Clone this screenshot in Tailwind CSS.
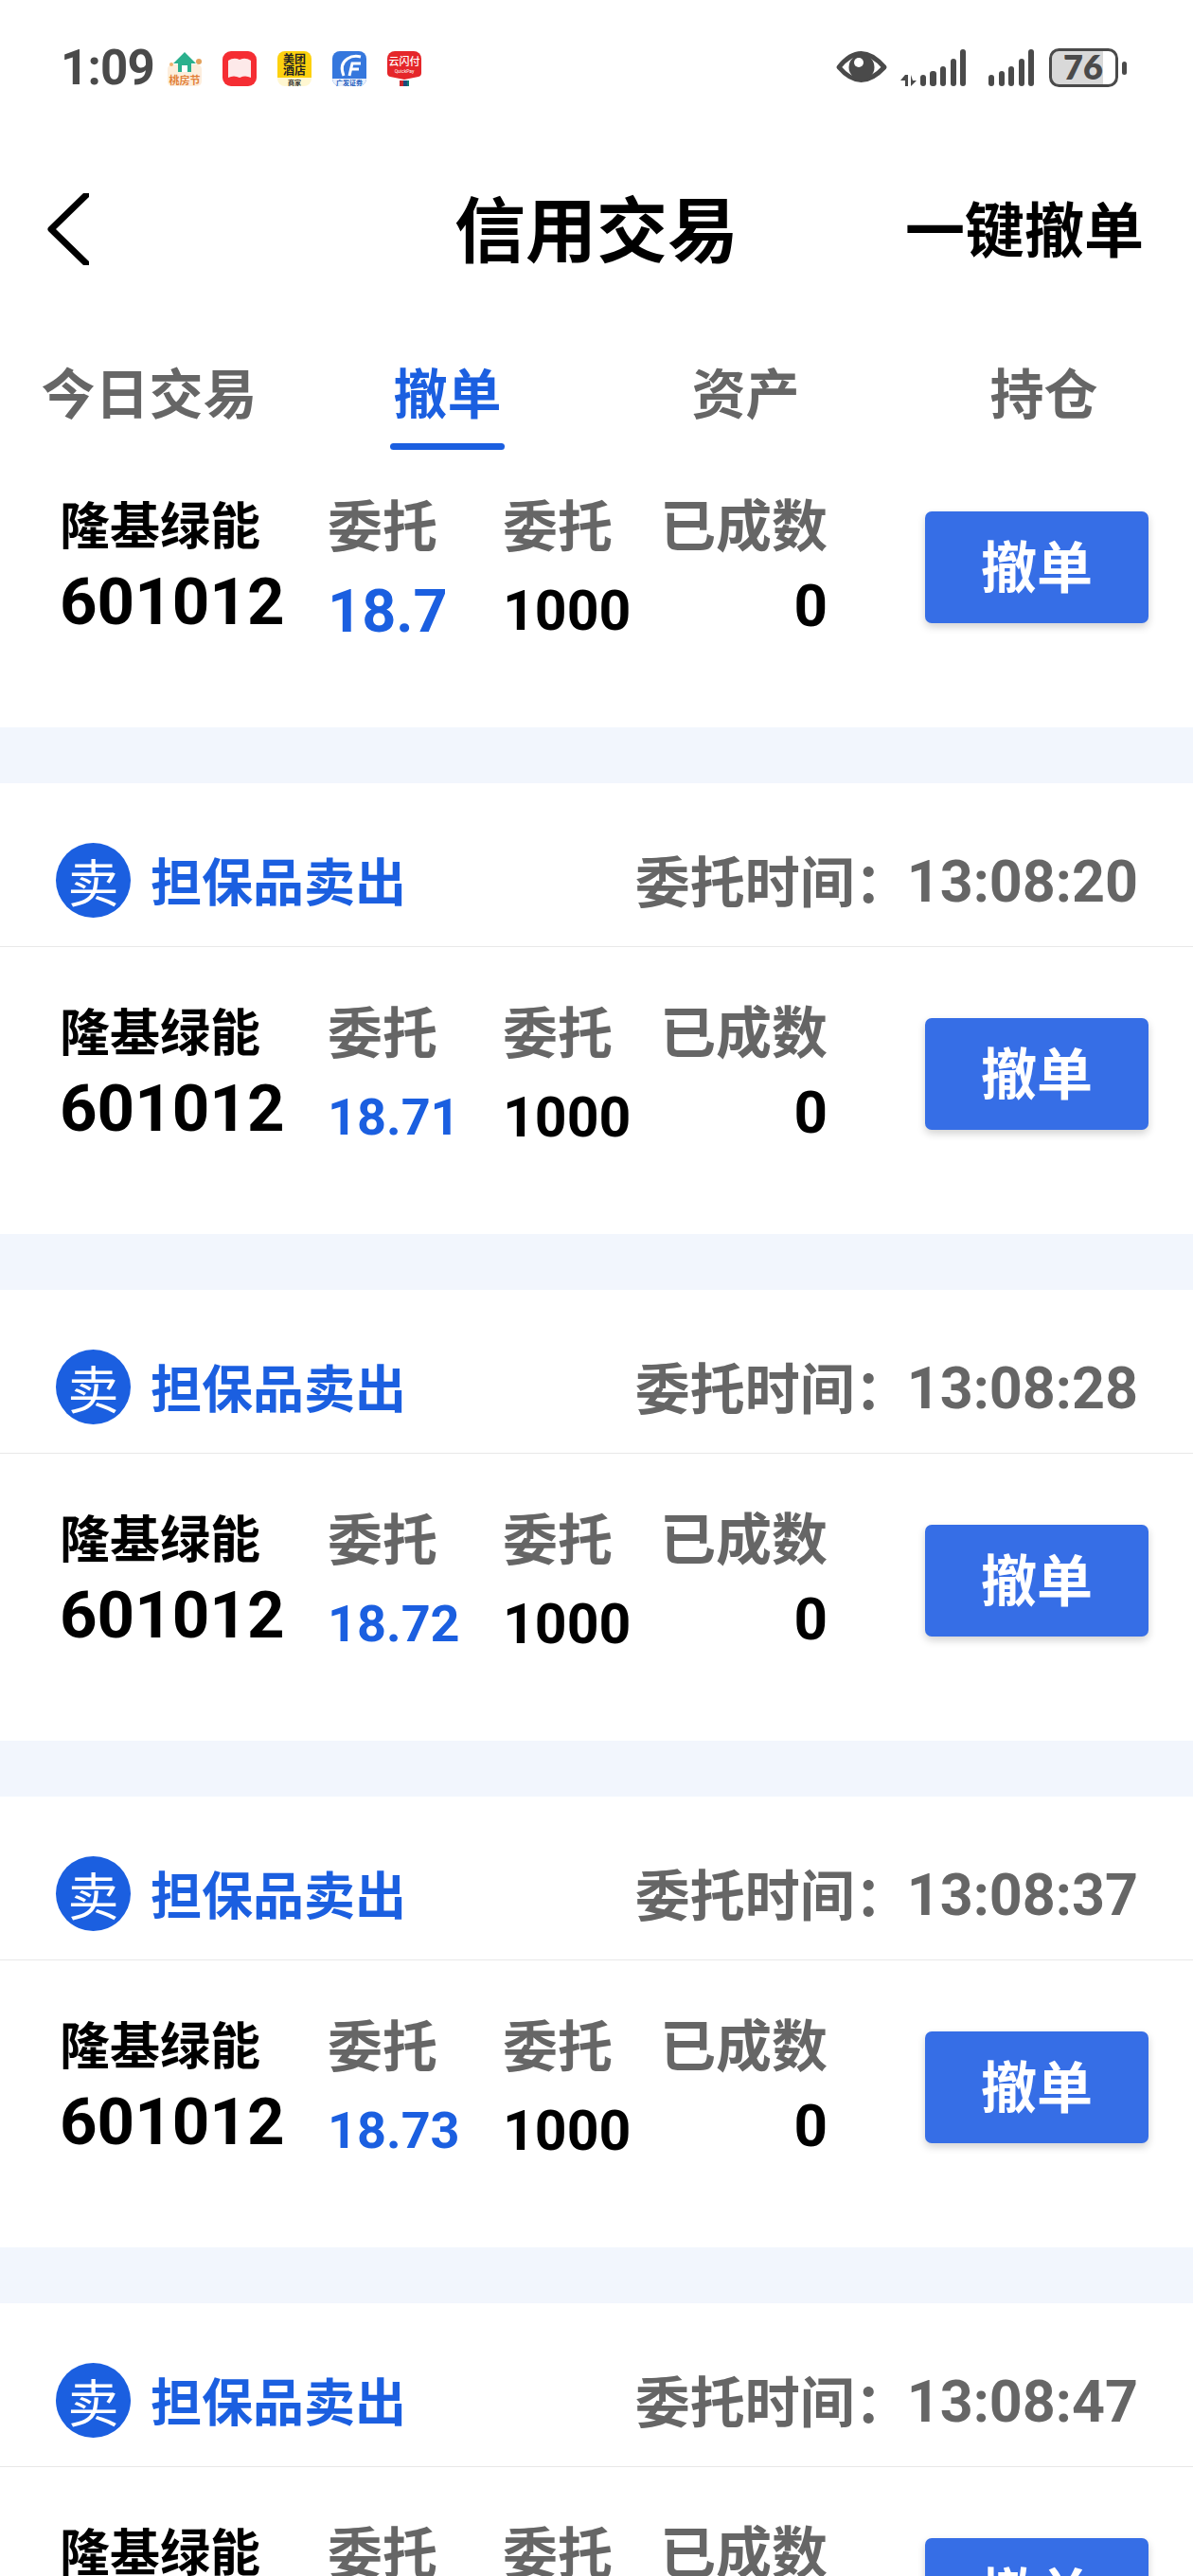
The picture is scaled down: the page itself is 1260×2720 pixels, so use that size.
<!doctype html>
<html lang="zh">
<head>
<meta charset="utf-8">
<script src="https://cdn.jsdelivr.net/npm/@tailwindcss/browser@4"></script>
</head>
<body class="bg-white">
<div class="w-[1260px] h-[2720px] overflow-hidden bg-white font-['Roboto','Noto_Sans_CJK_SC',sans-serif]">

  <!-- status bar -->
  <div class="h-[146px] flex items-start pt-[45px] pl-[64px] pr-[57px]">
    <span class="text-[51px] leading-[54px] font-bold text-[#4a4a4a] w-[113px] tracking-[-0.8px]">1:09</span>
    <div class="flex gap-[22px] mt-[9px]">
      <svg class="w-[36px] h-[37px]" viewBox="0 0 36 37"><rect y="14" width="36" height="23" rx="5" fill="#fdeedd"/><path d="M18 1 L30 13 H25 V22 H11 V13 H6Z" fill="#2bb08d"/><rect x="15" y="15" width="6" height="7" fill="#fff"/><circle cx="4" cy="14" r="2" fill="#eeb06c"/><circle cx="33" cy="11" r="3" fill="#e3a15c"/><text x="18" y="35" font-size="11" font-weight="700" text-anchor="middle" fill="#e2813a">桃房节</text></svg>
      <svg class="w-[36px] h-[37px]" viewBox="0 0 36 37"><rect width="36" height="37" rx="9" fill="#f52d33"/><path d="M6 10 Q12 6 18 9 Q24 6 30 10 V28 Q24 25 18 28 Q12 25 6 28Z" fill="#fde9e9"/></svg>
      <svg class="w-[36px] h-[37px]" viewBox="0 0 36 37"><rect width="36" height="37" rx="8" fill="#fff7d1"/><path d="M0 8 a8 8 0 0 1 8 -8 h20 a8 8 0 0 1 8 8 v20 h-36z" fill="#fdd10f"/><text x="18" y="13" font-size="12" font-weight="700" text-anchor="middle" fill="#222">美团</text><text x="18" y="25" font-size="12" font-weight="700" text-anchor="middle" fill="#222">酒店</text><text x="18" y="36" font-size="7" font-weight="700" text-anchor="middle" fill="#333">商家</text></svg>
      <svg class="w-[36px] h-[37px]" viewBox="0 0 36 37"><rect width="36" height="37" rx="8" fill="#3577dd"/><path d="M0 29 h36 v0 a8 8 0 0 1 -8 8 h-20 a8 8 0 0 1 -8 -8z" fill="#e8f0fc"/><path d="M12 26 Q7 14 16 8 Q22 4 30 6 M18 26 L21 13 H30 M19 19 H28" fill="none" stroke="#fff" stroke-width="3"/><text x="18" y="36" font-size="7" font-weight="700" text-anchor="middle" fill="#2a62c0">广发证券</text></svg>
      <svg class="w-[36px] h-[37px]" viewBox="0 0 36 37"><path d="M8 0 h20 a8 8 0 0 1 8 8 v15 q0 3 -3 4 l-15 3 l-15 -3 q-3 -1 -3 -4 v-15 a8 8 0 0 1 8 -8z" fill="#e5262a"/><text x="18" y="15" font-size="11" font-weight="500" text-anchor="middle" fill="#fff">云闪付</text><text x="18" y="23" font-size="5" text-anchor="middle" fill="#fff">QuickPay</text><rect x="13" y="31" width="4" height="6" fill="#c8262c"/><rect x="17" y="31" width="4" height="6" fill="#1c4a7c"/><rect x="21" y="31" width="2" height="6" fill="#0e7d74"/></svg>
    </div>
    <svg class="ml-auto w-[330px] h-[60px]" viewBox="870 45 330 60">
      <path d="M883 71 Q906 42 931 71 Q906 98 883 71Z" fill="none" stroke="#4a4a4a" stroke-width="5" stroke-linejoin="round"/>
      <circle cx="907" cy="71" r="13.5" fill="#4a4a4a"/><circle cx="904" cy="66" r="5" fill="#fff"/>
      <path d="M953 79 V91 H956 V79Z M948 85 L953 79 V85Z M959 79 V91 L965 85 H961Z" fill="#4a4a4a"/>
      <g fill="#4a4a4a">
        <rect x="969" y="79" width="6" height="12" rx="3"/><rect x="979" y="75" width="7" height="16" rx="3"/><rect x="990" y="70" width="6" height="21" rx="3"/><rect x="1001" y="62" width="6" height="29" rx="3"/><rect x="1011" y="52" width="6" height="39" rx="3"/>
        <rect x="1041" y="79" width="6" height="12" rx="3"/><rect x="1052" y="75" width="6" height="16" rx="3"/><rect x="1062" y="70" width="6" height="21" rx="3"/><rect x="1073" y="62" width="6" height="29" rx="3"/><rect x="1083" y="52" width="6" height="39" rx="3"/>
        <rect x="1182" y="65" width="5" height="14" rx="2.5"/>
      </g>
      <path d="M1110 53 H1162 V90 H1110Q1107 90 1107 84V59Q1107 53 1110 53Z" fill="#d9d9d9"/>
      <rect x="1106.5" y="52.5" width="70" height="38" rx="9" fill="none" stroke="#4a4a4a" stroke-width="3"/>
      <text x="1141" y="84" font-size="36" font-weight="800" font-family="Lato, Roboto, sans-serif" text-anchor="middle" fill="#4a4a4a">76</text>
    </svg>
  </div>

  <!-- title bar -->
  <div class="h-[192px] flex items-center pl-[50px] pr-[52px] text-black">
    <svg class="w-[44px] h-[76px] shrink-0" viewBox="0 0 44 76"><path d="M41 2 L4 38 L41 74" fill="none" stroke="#000" stroke-width="7" stroke-linecap="round" stroke-linejoin="round"/></svg>
    <span class="ml-[386px] -mt-[7px] text-[75px] leading-none font-bold font-['Noto_Sans_CJK_SC',sans-serif] whitespace-nowrap">信用交易</span>
    <span class="ml-auto -mt-[7px] text-[63px] leading-none font-bold font-['Noto_Sans_CJK_SC',sans-serif] whitespace-nowrap">一键撤单</span>
  </div>

  <!-- tabs -->
  <div class="h-[142px] grid grid-cols-4 font-['Noto_Sans_CJK_SC',sans-serif] text-[57px] font-bold text-[#666666] text-center">
    <div class="pt-[39px] leading-[70px]">今日交易</div>
    <div class="pt-[39px] leading-[70px] text-[#1b5fe0] flex flex-col items-center">撤单<span class="block w-[121px] h-[7px] rounded-full bg-[#1b5fe0] mt-[21px]"></span></div>
    <div class="pt-[39px] leading-[70px]">资产</div>
    <div class="pt-[39px] leading-[70px]">持仓</div>
  </div>

  <!-- first row (partly scrolled away) -->
  <div class="h-[288px] pt-[37px] pl-[63px] pr-[47px] flex items-start">
    <div class="w-[283px]"><div class="h-[70px] leading-[70px] text-[53px] font-bold text-black font-['Noto_Sans_CJK_SC',sans-serif]">隆基绿能</div><div class="h-[80px] leading-[80px] mt-[9px] text-[69px] font-bold text-black">601012</div></div>
    <div class="w-[185px]"><div class="h-[70px] leading-[70px] text-[58px] font-bold text-[#666666] font-['Noto_Sans_CJK_SC',sans-serif]">委托</div><div class="h-[80px] leading-[80px] mt-[19px] text-[63px] font-bold text-[#1b5fe0]">18.7</div></div>
    <div class="w-[166px]"><div class="h-[70px] leading-[70px] text-[58px] font-bold text-[#666666] font-['Noto_Sans_CJK_SC',sans-serif]">委托</div><div class="h-[80px] leading-[80px] mt-[18px] text-[59px] font-bold text-black">1000</div></div>
    <div class="w-[177px] text-right"><div class="h-[70px] leading-[70px] text-[59px] font-bold text-[#666666] font-['Noto_Sans_CJK_SC',sans-serif] whitespace-nowrap">已成数</div><div class="h-[80px] leading-[80px] mt-[13px] text-[62px] font-bold text-black">0</div></div>
    <button class="ml-auto mt-[23px] w-[236px] h-[118px] pb-[5px] rounded-[7px] bg-[#366ee6] text-white text-[59px] font-bold font-['Noto_Sans_CJK_SC',sans-serif] shadow-[0_4px_8px_rgba(0,0,0,0.18)]">撤单</button>
  </div>

  <!-- card 1 -->
  <div class="h-[59px] bg-[#f2f6fd]"></div>
  <div class="h-[173px] border-b border-[#e8e8e8] flex items-center pt-[33px] pl-[59px] pr-[58px]">
    <span class="w-[79px] h-[79px] rounded-full bg-[#1b5fe0] text-white text-[54px] leading-[79px] text-center font-['Noto_Sans_CJK_SC',sans-serif]">卖</span>
    <span class="ml-[21px] -mt-[2px] text-[54px] font-bold text-[#1b5fe0] font-['Noto_Sans_CJK_SC',sans-serif] whitespace-nowrap">担保品卖出</span>
    <span class="ml-auto -mt-[2px] text-[58px] font-bold text-[#666666] font-['Noto_Sans_CJK_SC',sans-serif] whitespace-nowrap">委托时间：</span>
    <span class="-ml-[3px] mt-[4px] text-[61px] font-bold text-[#666666]">13:08:20</span>
  </div>
  <div class="h-[303px] pt-[52px] pl-[63px] pr-[47px] flex items-start">
    <div class="w-[283px]"><div class="h-[70px] leading-[70px] text-[53px] font-bold text-black font-['Noto_Sans_CJK_SC',sans-serif]">隆基绿能</div><div class="h-[80px] leading-[80px] mt-[9px] text-[69px] font-bold text-black">601012</div></div>
    <div class="w-[185px]"><div class="h-[70px] leading-[70px] text-[58px] font-bold text-[#666666] font-['Noto_Sans_CJK_SC',sans-serif]">委托</div><div class="h-[80px] leading-[80px] mt-[18px] text-[54px] font-bold text-[#1b5fe0]">18.71</div></div>
    <div class="w-[166px]"><div class="h-[70px] leading-[70px] text-[58px] font-bold text-[#666666] font-['Noto_Sans_CJK_SC',sans-serif]">委托</div><div class="h-[80px] leading-[80px] mt-[18px] text-[59px] font-bold text-black">1000</div></div>
    <div class="w-[177px] text-right"><div class="h-[70px] leading-[70px] text-[59px] font-bold text-[#666666] font-['Noto_Sans_CJK_SC',sans-serif] whitespace-nowrap">已成数</div><div class="h-[80px] leading-[80px] mt-[13px] text-[62px] font-bold text-black">0</div></div>
    <button class="ml-auto mt-[23px] w-[236px] h-[118px] pb-[5px] rounded-[7px] bg-[#366ee6] text-white text-[59px] font-bold font-['Noto_Sans_CJK_SC',sans-serif] shadow-[0_4px_8px_rgba(0,0,0,0.18)]">撤单</button>
  </div>

  <!-- card 2 -->
  <div class="h-[59px] bg-[#f2f6fd]"></div>
  <div class="h-[173px] border-b border-[#e8e8e8] flex items-center pt-[33px] pl-[59px] pr-[58px]">
    <span class="w-[79px] h-[79px] rounded-full bg-[#1b5fe0] text-white text-[54px] leading-[79px] text-center font-['Noto_Sans_CJK_SC',sans-serif]">卖</span>
    <span class="ml-[21px] -mt-[2px] text-[54px] font-bold text-[#1b5fe0] font-['Noto_Sans_CJK_SC',sans-serif] whitespace-nowrap">担保品卖出</span>
    <span class="ml-auto -mt-[2px] text-[58px] font-bold text-[#666666] font-['Noto_Sans_CJK_SC',sans-serif] whitespace-nowrap">委托时间：</span>
    <span class="-ml-[3px] mt-[4px] text-[61px] font-bold text-[#666666]">13:08:28</span>
  </div>
  <div class="h-[303px] pt-[52px] pl-[63px] pr-[47px] flex items-start">
    <div class="w-[283px]"><div class="h-[70px] leading-[70px] text-[53px] font-bold text-black font-['Noto_Sans_CJK_SC',sans-serif]">隆基绿能</div><div class="h-[80px] leading-[80px] mt-[9px] text-[69px] font-bold text-black">601012</div></div>
    <div class="w-[185px]"><div class="h-[70px] leading-[70px] text-[58px] font-bold text-[#666666] font-['Noto_Sans_CJK_SC',sans-serif]">委托</div><div class="h-[80px] leading-[80px] mt-[18px] text-[54px] font-bold text-[#1b5fe0]">18.72</div></div>
    <div class="w-[166px]"><div class="h-[70px] leading-[70px] text-[58px] font-bold text-[#666666] font-['Noto_Sans_CJK_SC',sans-serif]">委托</div><div class="h-[80px] leading-[80px] mt-[18px] text-[59px] font-bold text-black">1000</div></div>
    <div class="w-[177px] text-right"><div class="h-[70px] leading-[70px] text-[59px] font-bold text-[#666666] font-['Noto_Sans_CJK_SC',sans-serif] whitespace-nowrap">已成数</div><div class="h-[80px] leading-[80px] mt-[13px] text-[62px] font-bold text-black">0</div></div>
    <button class="ml-auto mt-[23px] w-[236px] h-[118px] pb-[5px] rounded-[7px] bg-[#366ee6] text-white text-[59px] font-bold font-['Noto_Sans_CJK_SC',sans-serif] shadow-[0_4px_8px_rgba(0,0,0,0.18)]">撤单</button>
  </div>

  <!-- card 3 -->
  <div class="h-[59px] bg-[#f2f6fd]"></div>
  <div class="h-[173px] border-b border-[#e8e8e8] flex items-center pt-[33px] pl-[59px] pr-[58px]">
    <span class="w-[79px] h-[79px] rounded-full bg-[#1b5fe0] text-white text-[54px] leading-[79px] text-center font-['Noto_Sans_CJK_SC',sans-serif]">卖</span>
    <span class="ml-[21px] -mt-[2px] text-[54px] font-bold text-[#1b5fe0] font-['Noto_Sans_CJK_SC',sans-serif] whitespace-nowrap">担保品卖出</span>
    <span class="ml-auto -mt-[2px] text-[58px] font-bold text-[#666666] font-['Noto_Sans_CJK_SC',sans-serif] whitespace-nowrap">委托时间：</span>
    <span class="-ml-[3px] mt-[4px] text-[61px] font-bold text-[#666666]">13:08:37</span>
  </div>
  <div class="h-[303px] pt-[52px] pl-[63px] pr-[47px] flex items-start">
    <div class="w-[283px]"><div class="h-[70px] leading-[70px] text-[53px] font-bold text-black font-['Noto_Sans_CJK_SC',sans-serif]">隆基绿能</div><div class="h-[80px] leading-[80px] mt-[9px] text-[69px] font-bold text-black">601012</div></div>
    <div class="w-[185px]"><div class="h-[70px] leading-[70px] text-[58px] font-bold text-[#666666] font-['Noto_Sans_CJK_SC',sans-serif]">委托</div><div class="h-[80px] leading-[80px] mt-[18px] text-[54px] font-bold text-[#1b5fe0]">18.73</div></div>
    <div class="w-[166px]"><div class="h-[70px] leading-[70px] text-[58px] font-bold text-[#666666] font-['Noto_Sans_CJK_SC',sans-serif]">委托</div><div class="h-[80px] leading-[80px] mt-[18px] text-[59px] font-bold text-black">1000</div></div>
    <div class="w-[177px] text-right"><div class="h-[70px] leading-[70px] text-[59px] font-bold text-[#666666] font-['Noto_Sans_CJK_SC',sans-serif] whitespace-nowrap">已成数</div><div class="h-[80px] leading-[80px] mt-[13px] text-[62px] font-bold text-black">0</div></div>
    <button class="ml-auto mt-[23px] w-[236px] h-[118px] pb-[5px] rounded-[7px] bg-[#366ee6] text-white text-[59px] font-bold font-['Noto_Sans_CJK_SC',sans-serif] shadow-[0_4px_8px_rgba(0,0,0,0.18)]">撤单</button>
  </div>

  <!-- card 4 (cut off by the bottom edge) -->
  <div class="h-[59px] bg-[#f2f6fd]"></div>
  <div class="h-[173px] border-b border-[#e8e8e8] flex items-center pt-[33px] pl-[59px] pr-[58px]">
    <span class="w-[79px] h-[79px] rounded-full bg-[#1b5fe0] text-white text-[54px] leading-[79px] text-center font-['Noto_Sans_CJK_SC',sans-serif]">卖</span>
    <span class="ml-[21px] -mt-[2px] text-[54px] font-bold text-[#1b5fe0] font-['Noto_Sans_CJK_SC',sans-serif] whitespace-nowrap">担保品卖出</span>
    <span class="ml-auto -mt-[2px] text-[58px] font-bold text-[#666666] font-['Noto_Sans_CJK_SC',sans-serif] whitespace-nowrap">委托时间：</span>
    <span class="-ml-[3px] mt-[4px] text-[61px] font-bold text-[#666666]">13:08:47</span>
  </div>
  <div class="h-[303px] pt-[52px] pl-[63px] pr-[47px] flex items-start">
    <div class="w-[283px]"><div class="h-[70px] leading-[70px] text-[53px] font-bold text-black font-['Noto_Sans_CJK_SC',sans-serif]">隆基绿能</div></div>
    <div class="w-[185px]"><div class="h-[70px] leading-[70px] text-[58px] font-bold text-[#666666] font-['Noto_Sans_CJK_SC',sans-serif]">委托</div></div>
    <div class="w-[166px]"><div class="h-[70px] leading-[70px] text-[58px] font-bold text-[#666666] font-['Noto_Sans_CJK_SC',sans-serif]">委托</div></div>
    <div class="w-[177px] text-right"><div class="h-[70px] leading-[70px] text-[59px] font-bold text-[#666666] font-['Noto_Sans_CJK_SC',sans-serif] whitespace-nowrap">已成数</div></div>
    <button class="ml-auto mt-[23px] w-[236px] h-[118px] pb-[5px] rounded-[7px] bg-[#366ee6] text-white text-[59px] font-bold font-['Noto_Sans_CJK_SC',sans-serif] shadow-[0_4px_8px_rgba(0,0,0,0.18)]">撤单</button>
  </div>
</div>
</body>
</html>
